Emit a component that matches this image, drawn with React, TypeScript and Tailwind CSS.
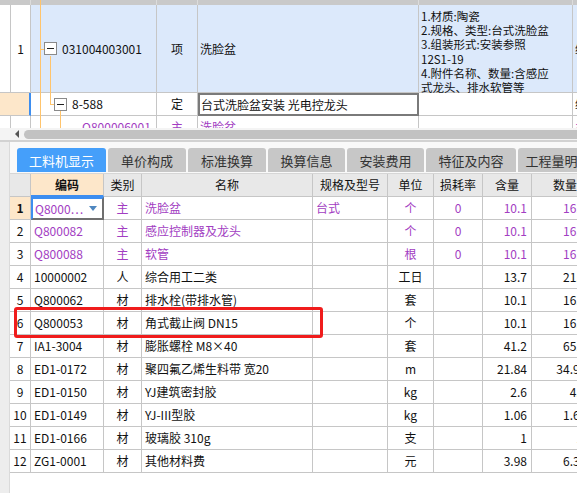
import React from "react";

const PURPLE = "text-[#a23dc2]";

const items = [
  { n: "1", code: "Q8000⋯", type: "主", name: "洗脸盆", spec: "台式", unit: "个", loss: "0", amt: "10.1", qty: "16.16", main: true },
  { n: "2", code: "Q800082", type: "主", name: "感应控制器及龙头", spec: "", unit: "个", loss: "0", amt: "10.1", qty: "16.16", main: true },
  { n: "3", code: "Q800088", type: "主", name: "软管", spec: "", unit: "根", loss: "0", amt: "10.1", qty: "16.16", main: true },
  { n: "4", code: "10000002", type: "人", name: "综合用工二类", spec: "", unit: "工日", loss: "", amt: "13.7", qty: "21.92" },
  { n: "5", code: "Q800062", type: "材", name: "排水栓(带排水管)", spec: "", unit: "套", loss: "", amt: "10.1", qty: "16.16" },
  { n: "6", code: "Q800053", type: "材", name: "角式截止阀 DN15", spec: "", unit: "个", loss: "", amt: "10.1", qty: "16.16" },
  { n: "7", code: "IA1-3004", type: "材", name: "膨胀螺栓 M8×40", spec: "", unit: "套", loss: "", amt: "41.2", qty: "65.92" },
  { n: "8", code: "ED1-0172", type: "材", name: "聚四氟乙烯生料带 宽20", spec: "", unit: "m", loss: "", amt: "21.84", qty: "34.944" },
  { n: "9", code: "ED1-0150", type: "材", name: "YJ建筑密封胶", spec: "", unit: "kg", loss: "", amt: "2.6", qty: "4.16" },
  { n: "10", code: "ED1-0149", type: "材", name: "YJ-III型胶", spec: "", unit: "kg", loss: "", amt: "1.06", qty: "1.696" },
  { n: "11", code: "ED1-0166", type: "材", name: "玻璃胶 310g", spec: "", unit: "支", loss: "", amt: "1", qty: "1.6" },
  { n: "12", code: "ZG1-0001", type: "材", name: "其他材料费", spec: "", unit: "元", loss: "", amt: "3.98", qty: "6.368" },
];

const tabs = [
  { label: "工料机显示", w: "w-[89px]", active: true },
  { label: "单价构成", w: "w-[78px]" },
  { label: "标准换算", w: "w-[78px]" },
  { label: "换算信息", w: "w-[77px]" },
  { label: "安装费用", w: "w-[77px]" },
  { label: "特征及内容", w: "w-[90px]" },
  { label: "工程量明细", w: "w-[80px]" },
];

const cell = "border-r border-b border-[#c6c6c6] h-[23px] flex items-center overflow-hidden whitespace-nowrap min-w-0";

function ExpandBox() {
  return (
    <div className="w-[13px] h-[13px] border border-[#8a8a8a] bg-white flex items-center justify-center shrink-0">
      <div className="w-[7px] h-[1px] bg-[#222]" />
    </div>
  );
}

export default function App() {
  return (
    <div className="w-[577px] h-[495px] overflow-hidden bg-white relative text-[12px] text-[#111] font-['Noto_Sans_CJK_SC','Liberation_Sans',sans-serif] leading-none">
      {/* upper list */}
      <div className="h-[128px] overflow-hidden relative">
        <div className="grid grid-cols-[31px_126px_41px_221px_154px_40px] w-[613px]">
          {/* header strip */}
          <div className="h-[5px] bg-[#c9c9c9] border-r border-[#dcdcdc]" />
          <div className="h-[5px] bg-[#c9c9c9] border-r border-[#dcdcdc]" />
          <div className="h-[5px] bg-[#c9c9c9] border-r border-[#dcdcdc]" />
          <div className="h-[5px] bg-[#c9c9c9] border-r border-[#dcdcdc]" />
          <div className="h-[5px] bg-[#c9c9c9] border-r border-[#dcdcdc]" />
          <div className="h-[5px] bg-[#c9c9c9]" />

          {/* row 1 */}
          <div className="h-[88px] flex border-r border-b border-[#c6c6c6]">
            <div className="w-[10px]" />
            <div className="flex-1 border-l border-[#c6c6c6] flex items-center justify-center">1</div>
          </div>
          <div className="h-[88px] bg-[#dce9fb] border-r border-b border-[#c6c6c6] flex items-center pl-[13px] gap-[5px]">
            <ExpandBox />
            <span>031004003001</span>
          </div>
          <div className="h-[88px] bg-[#dce9fb] border-r border-b border-[#c6c6c6] flex items-center justify-center">项</div>
          <div className="h-[88px] bg-[#dce9fb] border-r border-b border-[#c6c6c6] flex items-center pl-[2px]">洗脸盆</div>
          <div className="h-[88px] bg-[#dce9fb] border-r border-b border-[#c6c6c6] pl-[2px] pt-[4px] text-[11.5px] leading-[14.2px] flex flex-col">
            <span>1.材质:陶瓷</span>
            <span>2.规格、类型:台式洗脸盆</span>
            <span>3.组装形式:安装参照</span>
            <span>12S1-19</span>
            <span>4.附件名称、数量:含感应</span>
            <span>式龙头、排水软管等</span>
          </div>
          <div className="h-[88px] bg-[#dce9fb] border-b border-[#c6c6c6] flex items-center pl-[2px] whitespace-nowrap">综合</div>

          {/* row 2 */}
          <div className="h-[23px] bg-[#fde7ca] border-r-2 border-b border-r-[#3d8ef0] border-b-[#c6c6c6]" />
          <div className="h-[23px] border-r border-b border-[#c6c6c6] flex items-center pl-[23px] gap-[5px]">
            <ExpandBox />
            <span>8-588</span>
          </div>
          <div className="h-[23px] border-r border-b border-[#c6c6c6] flex items-center justify-center">定</div>
          <div className="h-[23px] border-2 border-[#7a7a7a] flex items-center pl-[1px] whitespace-nowrap">台式洗脸盆安装 光电控龙头</div>
          <div className="h-[23px] border-r border-b border-[#c6c6c6]" />
          <div className="h-[23px] border-b border-[#c6c6c6] flex items-center pl-[2px] whitespace-nowrap">综合</div>

          {/* row 3 */}
          <div className="h-[23px] flex border-r border-b border-[#c6c6c6]">
            <div className="w-[10px]" />
            <div className="flex-1 border-l border-[#c6c6c6]" />
          </div>
          <div className={`h-[23px] border-r border-b border-[#c6c6c6] flex items-center pl-[51px] ${PURPLE}`}>Q800006001</div>
          <div className={`h-[23px] border-r border-b border-[#c6c6c6] flex items-center justify-center ${PURPLE}`}>主</div>
          <div className={`h-[23px] border-r border-b border-[#c6c6c6] flex items-center pl-[2px] ${PURPLE}`}>洗脸盆</div>
          <div className="h-[23px] border-r border-b border-[#c6c6c6]" />
          <div className={`h-[23px] border-b border-[#c6c6c6] flex items-center pl-[2px] ${PURPLE}`}>主</div>
        </div>

        {/* tree connector lines */}
        <svg className="absolute left-0 top-0 pointer-events-none" width="100" height="128">
          <g stroke="#ffc46c" strokeWidth="1" fill="none">
            <line x1="40.5" y1="0" x2="40.5" y2="128" />
            <line x1="40" y1="49.5" x2="44" y2="49.5" />
            <line x1="50.5" y1="56" x2="50.5" y2="104.5" />
            <line x1="50" y1="104.5" x2="54" y2="104.5" />
            <line x1="60.5" y1="111" x2="60.5" y2="128" />
          </g>
        </svg>
      </div>

      {/* horizontal scrollbar */}
      <div className="h-[14px] bg-[#f4f4f4] flex items-center border-b-2 border-[#d2d2d2]">
        <div className="w-[24px] flex justify-end pr-[5px]">
          <div className="w-0 h-0 border-y-[4px] border-y-transparent border-r-[4px] border-r-[#555]" />
        </div>
        <div className="flex-1 h-[9px] rounded-l-full bg-[#c2c2c2]" />
      </div>

      {/* lower panel */}
      <div className="flex h-[351px]">
        <div className="w-[10px] bg-[#ededed] border-r border-[#dadada]" />
        <div className="flex-1 flex flex-col overflow-hidden bg-[#f9f9f9]">
          {/* tabs */}
          <div className="flex pt-[6px] pl-[7px] h-[31px] whitespace-nowrap">
            {tabs.map((t, i) => (
              <div
                key={t.label}
                className={`${t.w} shrink-0 h-[24px] rounded-t-[3px] flex items-center justify-center text-[13px] ${
                  i > 0 ? "ml-[2px]" : ""
                } ${t.active ? "bg-[#459ffa] text-white" : "bg-[#c7c7c7] text-[#333]"}`}
              >
                {t.label}
              </div>
            ))}
          </div>

          {/* material grid */}
          <div className="grid grid-cols-[21px_73px_38px_171px_75px_46px_49px_49px_66px] w-[588px] bg-white border-t border-[#d6d6d6]">
            <div className={`${cell} bg-[#e8e8e8]`} />
            <div className={`${cell} bg-[#fde7ca] justify-center font-bold border-b-2 border-b-[#3d8ef0]`}>编码</div>
            <div className={`${cell} bg-[#e8e8e8] justify-center`}>类别</div>
            <div className={`${cell} bg-[#e8e8e8] justify-center`}>名称</div>
            <div className={`${cell} bg-[#e8e8e8] justify-center`}>规格及型号</div>
            <div className={`${cell} bg-[#e8e8e8] justify-center`}>单位</div>
            <div className={`${cell} bg-[#e8e8e8] justify-center`}>损耗率</div>
            <div className={`${cell} bg-[#e8e8e8] justify-center`}>含量</div>
            <div className={`${cell} bg-[#e8e8e8] justify-start pl-[21px]`}>数量</div>

            {items.map((r, i) => {
              const color = r.main ? PURPLE : "";
              return (
                <React.Fragment key={r.n}>
                  <div className={`${cell} justify-center ${i === 0 ? "bg-[#fde7ca] font-bold" : ""}`}>{r.n}</div>
                  {i === 0 ? (
                    <div className="h-[23px] min-w-0 overflow-hidden border-2 border-t-[#3d8ef0] border-l-[#3d8ef0] border-r-[#6f6f6f] border-b-[#6f6f6f] flex items-center pl-[2px] pr-[5px] justify-between whitespace-nowrap">
                      <span className={color}>{r.code}</span>
                      <div className="w-0 h-0 shrink-0 border-x-[4px] border-x-transparent border-t-[5px] border-t-[#4f87c0]" />
                    </div>
                  ) : (
                    <div className={`${cell} pl-[3px] ${color}`}>{r.code}</div>
                  )}
                  <div className={`${cell} justify-center ${color}`}>{r.type}</div>
                  <div className={`${cell} pl-[3px] ${color}`}>{r.name}</div>
                  <div className={`${cell} pl-[3px] ${color}`}>{r.spec}</div>
                  <div className={`${cell} justify-center ${color}`}>{r.unit}</div>
                  <div className={`${cell} justify-center ${color}`}>{r.loss}</div>
                  <div className={`${cell} justify-end pr-[4px] ${color}`}>{r.amt}</div>
                  <div className={`${cell} justify-end pr-[4px] ${color}`}>{r.qty}</div>
                </React.Fragment>
              );
            })}
          </div>
          <div className="flex-1 bg-white" />
        </div>
      </div>

      {/* red highlight around row 6 */}
      <div className="absolute left-[14px] top-[307px] w-[309px] h-[31px] border-[3px] border-[#f01c1c] rounded-[3px] pointer-events-none" />
    </div>
  );
}
